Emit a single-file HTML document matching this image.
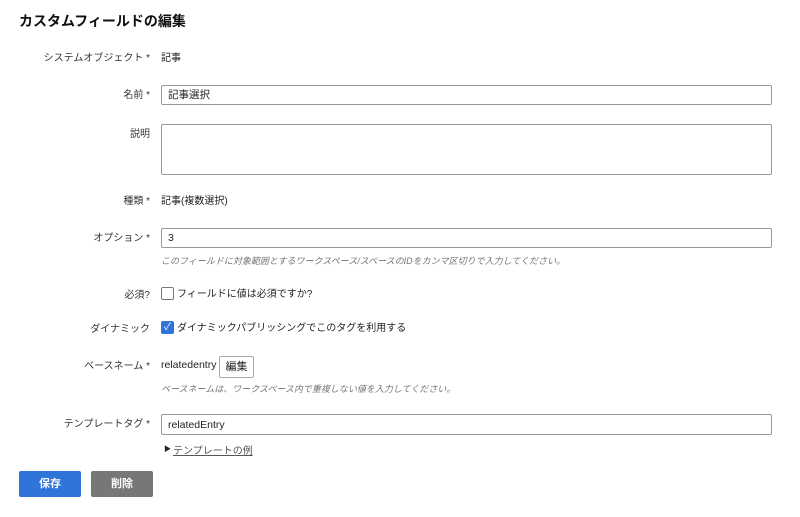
<!DOCTYPE html>
<html><head><meta charset="utf-8"><style>
body{margin:0;width:800px;height:517px;background:#fff;font-family:"Liberation Sans","Noto Sans CJK JP",sans-serif;color:#222;font-size:10px;position:relative;overflow:hidden}
.a{position:absolute;white-space:nowrap}
.l{position:absolute;right:650px;text-align:right;white-space:nowrap;color:#333}
.in{position:absolute;left:161px;width:611px;height:19px;border:1px solid #999;border-radius:2px;box-sizing:border-box;padding-left:6px;line-height:18px;font-size:10.5px}
.help{position:absolute;left:161px;font-size:9px;color:#777;font-style:italic;white-space:nowrap}
.btn{position:absolute;top:471px;height:26px;width:62px;border-radius:2px;color:#fff;font-weight:bold;font-size:11px;text-align:center;line-height:26px}
</style></head><body>
<div class="a" style="left:19px;top:11px;font-size:14px;font-weight:bold;color:#111">カスタムフィールドの編集</div>

<div class="l" style="top:49px">システムオブジェクト *</div>
<div class="a" style="left:161px;top:49px">記事</div>

<div class="l" style="top:86px">名前 *</div>
<div class="in" style="top:85px;height:20px">記事選択</div>

<div class="l" style="top:125px">説明</div>
<div class="in" style="top:124px;height:51px"></div>

<div class="l" style="top:192px">種類 *</div>
<div class="a" style="left:161px;top:192px">記事(複数選択)</div>

<div class="l" style="top:229px">オプション *</div>
<div class="in" style="top:228px;height:20px">3</div>
<div class="help" style="top:254px">このフィールドに対象範囲とするワークスペース/スペースのIDをカンマ区切りで入力してください。</div>

<div class="l" style="top:286px">必須?</div>
<div class="a" style="left:161px;top:287px;width:11px;height:11px;border:1px solid #777;border-radius:2px"></div>
<div class="a" style="left:177px;top:285px">フィールドに値は必須ですか?</div>

<div class="l" style="top:320px">ダイナミック</div>
<div class="a" style="left:161px;top:321px;width:13px;height:13px;background:#2f74d8;border-radius:2px;color:#fff;font-size:10px;line-height:13px;text-align:center">✓</div>
<div class="a" style="left:177px;top:319px">ダイナミックパブリッシングでこのタグを利用する</div>

<div class="l" style="top:357px">ベースネーム *</div>
<div class="a" style="left:161px;top:359px;font-size:10.5px">relatedentry</div>
<div class="a" style="left:219px;top:356px;width:33px;height:20px;border:1px solid #aaa;border-radius:2px;text-align:center;line-height:20px;font-size:11px">編集</div>
<div class="help" style="top:382px">ベースネームは、ワークスペース内で重複しない値を入力してください。</div>

<div class="l" style="top:415px">テンプレートタグ *</div>
<div class="in" style="top:414px;height:21px;line-height:20px">relatedEntry</div>
<div class="a" style="left:164px;top:444px;font-size:7px">▶</div>
<div class="a" style="left:173px;top:442px;color:#555;text-decoration:underline">テンプレートの例</div>

<div class="btn" style="left:19px;background:#2f74d8">保存</div>
<div class="btn" style="left:91px;background:#777">削除</div>
</body></html>
